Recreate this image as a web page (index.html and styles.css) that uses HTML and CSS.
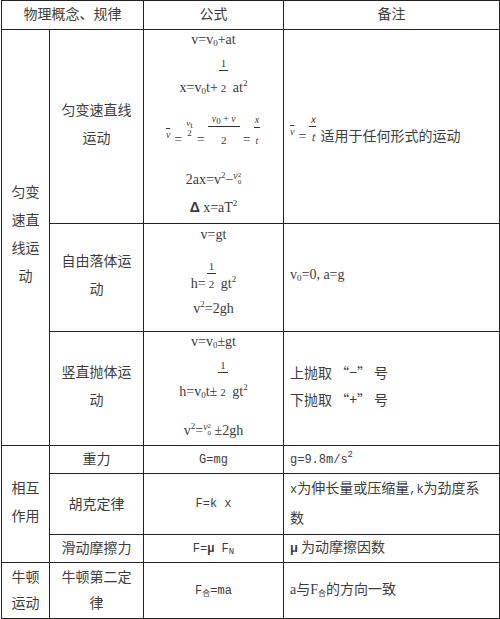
FILE: index.html
```html
<!DOCTYPE html>
<html lang="zh">
<head>
<meta charset="utf-8">
<title>物理概念、规律</title>
<link rel="stylesheet" href="styles.css">
</head>
<body>
<table class="sheet">
  <colgroup>
    <col class="c1"><col class="c2"><col class="c3"><col class="c4">
  </colgroup>
  <tr class="r-head">
    <th colspan="2">物理概念、规律</th>
    <th>公式</th>
    <th>备注</th>
  </tr>
  <tr class="r-a">
    <td rowspan="3" class="grp grp-a">匀变速直线运动</td>
    <td class="name two">匀变速直线运动</td>
    <td class="fx">
      <div class="fl">v=v<sub>0</sub>+at</div>
      <div class="fl a2"><span>x=v<sub>0</sub>t+</span><span class="frac half"><span class="num">1</span><span class="den pad5">2</span></span><span> at<sup>2</sup></span></div>
      <div class="fl a3">
        <span class="vbar">v</span><span class="eq">=</span><span class="frac tiny"><span class="num"><i>v</i><sub>t</sub></span><span class="den">2</span></span><span class="eq">=</span><span class="frac wide"><span class="num"><i>v</i><sub>0</sub> + <i>v</i></span><span class="den pad3">2</span></span><span class="eq">=</span><span class="frac it"><span class="num"><i>x</i></span><span class="den pad3"><i>t</i></span></span>
      </div>
      <div class="fl a4">2ax=v<sup>2</sup>−<span class="vsq"><i>v</i><span class="ix"><span>2</span><span>0</span></span></span></div>
      <div class="fl a5"><b class="delta">Δ</b> x=aT<sup>2</sup></div>
    </td>
    <td class="note note-a"><span class="vbar">v</span><span class="eq">=</span><span class="frac it"><span class="num"><i>x</i></span><span class="den"><i>t</i></span></span> 适用于任何形式的运动</td>
  </tr>
  <tr class="r-b">
    <td class="name two">自由落体运动</td>
    <td class="fx">
      <div class="fl b1">v=gt</div>
      <div class="fl b2"><span>h=</span><span class="frac half"><span class="num">1</span><span class="den">2</span></span><span> gt<sup>2</sup></span></div>
      <div class="fl b3">v<sup>2</sup>=2gh</div>
    </td>
    <td class="note note-b"><span class="serif">v<sub>0</sub>=0, a=g</span></td>
  </tr>
  <tr class="r-c">
    <td class="name two">竖直抛体运动</td>
    <td class="fx">
      <div class="fl c1l">v=v<sub>0</sub>±gt</div>
      <div class="fl c2l"><span>h=v<sub>0</sub>t±</span><span class="frac half"><span class="num">1</span><span class="den pad7">2</span></span><span> gt<sup>2</sup></span></div>
      <div class="fl c3l">v<sup>2</sup>=<span class="vsq"><i>v</i><span class="ix"><span>2</span><span>0</span></span></span> ±2gh</div>
    </td>
    <td class="note note-c">上抛取 “−” 号<br>下抛取 “+” 号</td>
  </tr>
  <tr class="r-d">
    <td rowspan="3" class="grp">相互作用</td>
    <td class="name">重力</td>
    <td class="fx-m"><span class="mono">G=mg</span></td>
    <td class="note"><span class="mono">g=9.8m/s<sup>2</sup></span></td>
  </tr>
  <tr class="r-e">
    <td class="name">胡克定律</td>
    <td class="fx-m"><span class="mono">F=k x</span></td>
    <td class="note note-e"><span class="mono">x</span>为伸长量或压缩量<span class="mono">,k</span>为劲度系<br>数</td>
  </tr>
  <tr class="r-f">
    <td class="name">滑动摩擦力</td>
    <td class="fx-m"><span class="mono">F=<b>μ</b> F<sub>N</sub></span></td>
    <td class="note"><b class="mu">μ</b> 为动摩擦因数</td>
  </tr>
  <tr class="r-g">
    <td class="grp grp-g">牛顿运动</td>
    <td class="name name-g">牛顿第二定律</td>
    <td class="fx-m"><span class="mono">F<sub class="he">合</sub>=ma</span></td>
    <td class="note"><span class="serif">a</span>与<span class="serif">F</span><sub class="he">合</sub>的方向一致</td>
  </tr>
</table>
</body>
</html>
```

FILE: styles.css
```css
* { box-sizing: border-box; }

html, body {
  margin: 0;
  background: #ffffff;
}

body {
  padding: 0 0 0 1px;
  font-family: "Noto Sans CJK SC", sans-serif;
  font-size: 14px;
  color: #3d3d3d;
}

.sheet {
  border-collapse: collapse;
  table-layout: fixed;
  width: 498px;
}

.sheet th,
.sheet td {
  border: 1px solid #222222;
  padding: 0;
  text-align: center;
  vertical-align: middle;
  font-weight: normal;
  line-height: 20px;
}

.c1 { width: 48px; }
.c2 { width: 94px; }
.c3 { width: 140px; }
.c4 { width: 216px; }

.r-head { height: 29px; }
.r-a { height: 194px; }
.r-b { height: 108px; }
.r-c { height: 114px; }
.r-d { height: 28px; }
.r-e { height: 57px; }
.r-f { height: 28px; }
.r-g { height: 55px; }

.sheet .r-head th {
  padding-bottom: 4px;
  font-size: 14px;
}

/* group (first) column */
.sheet td.grp {
  padding: 0 9px 6px;
  line-height: 28px;
}
.sheet td.grp-a { padding-bottom: 10px; }
.sheet td.grp-g {
  line-height: 26px;
  padding-bottom: 3px;
}

/* concept column */
.sheet td.name {
  padding: 0 8px 3px;
}
.sheet td.name.two {
  line-height: 28px;
  padding-bottom: 8px;
}
.sheet td.name-g {
  line-height: 26px;
  padding-bottom: 3px;
}

/* notes column */
.sheet td.note {
  text-align: left;
  padding: 0 2px 3px 6px;
}
.sheet td.note-c {
  line-height: 27px;
  padding-bottom: 6px;
}
.sheet td.note-e {
  line-height: 27px;
  padding-bottom: 3px;
}
.sheet td.note-a { padding-top: 6px; padding-bottom: 0; }
.sheet td.note-b { padding-bottom: 8px; }

/* formulas */
.sheet td.fx {
  vertical-align: top;
  font-family: "Liberation Serif", "Noto Sans CJK SC", serif;
  font-size: 14px;
  color: #3a3a3a;
}
.sheet td.fx-m { padding-bottom: 3px; }

.fl {
  display: block;
  line-height: 20px;
  white-space: nowrap;
}

.a2 { margin-top: 6px; }
.a3 { margin-top: 14px; }
.a4 { margin-top: 15px; }
.a5 { margin-top: 7px; }

.b1 { margin-top: 1px; }
.b2 { margin-top: 14px; }
.b3 { margin-top: 5px; }

.c1l { margin-top: 0; }
.c2l { margin-top: 6px; }
.c3l { margin-top: 15px; }

sub, sup {
  font-size: 9px;
  line-height: 0;
}
sub { vertical-align: -2px; }
sup { vertical-align: 6px; }

.frac {
  display: inline-block;
  text-align: center;
  vertical-align: baseline;
  margin: 0 1px;
}
.frac .num {
  display: block;
  line-height: 14px;
  font-size: 10px;
  border-bottom: 1px solid #333;
  padding: 0 1px;
}
.frac .den {
  display: block;
  line-height: 20px;
  font-size: 11px;
}
.frac.half .num {
  font-size: 11px;
  padding: 0 2px;
}
.frac.half .den { font-size: 11px; }
.frac .den.pad3 { padding-top: 3px; }
.frac .den.pad5 { padding-top: 7px; }
.frac .den.pad7 { padding-top: 9px; }

.frac.tiny { vertical-align: 8px; }
.frac.tiny .num {
  font-size: 9px;
  line-height: 10px;
  border-bottom: none;
}
.frac.tiny .den {
  font-size: 9px;
  line-height: 10px;
}

.frac.wide .num { padding: 0 4px; }
.frac.it { font-style: italic; }
.frac.it .num,
.frac.it .den { font-size: 10px; }

.vbar {
  font-family: "Liberation Serif", serif;
  font-style: italic;
  font-size: 10px;
  text-decoration: overline;
  vertical-align: 6px;
  margin-right: 2px;
}

.eq {
  font-family: "Liberation Serif", serif;
  margin: 0 2px;
}

.vsq {
  display: inline-block;
  font-size: 10px;
  vertical-align: 5px;
  white-space: nowrap;
}
.vsq i { font-size: 10px; }
.ix {
  display: inline-flex;
  flex-direction: column;
  vertical-align: 2px;
  font-size: 7px;
  line-height: 7px;
}

.delta {
  font-family: "Liberation Sans", sans-serif;
  font-weight: bold;
  font-size: 14px;
}

.mono {
  font-family: "Liberation Mono", "Noto Sans CJK SC", monospace;
  font-size: 12px;
}
.mono b { font-weight: bold; }

.serif {
  font-family: "Liberation Serif", serif;
  font-size: 14px;
}

.mu {
  font-family: "Liberation Sans", sans-serif;
  font-weight: bold;
  font-size: 13px;
}

.he {
  font-size: 8px;
  vertical-align: -2px;
}
```
